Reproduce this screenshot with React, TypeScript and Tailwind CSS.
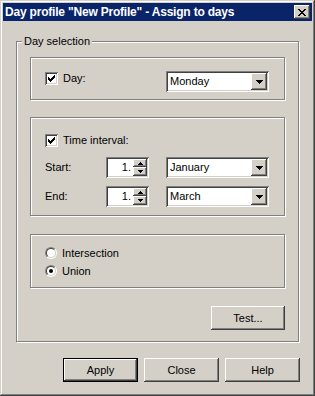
import React from "react";

const sunken =
  "shadow-[inset_1px_1px_0_#808080,inset_-1px_-1px_0_#ffffff,inset_2px_2px_0_#404040,inset_-2px_-2px_0_#d4d0c8]";
const raised =
  "shadow-[inset_-1px_-1px_0_#404040,inset_1px_1px_0_#ffffff,inset_-2px_-2px_0_#808080,inset_2px_2px_0_#d4d0c8]";
const etched = "border border-[#808080] shadow-[1px_1px_0_#ffffff,inset_1px_1px_0_#ffffff]";

function CheckBox() {
  const cols = [2, 3, 4, 3, 2, 1, 0];
  return (
    <span className={`w-[13px] h-[13px] shrink-0 bg-white flex items-center justify-center ${sunken}`}>
      <svg width="7" height="7" viewBox="0 0 7 7" shapeRendering="crispEdges">
        {cols.map((y, x) => (
          <rect key={x} x={x} y={y} width="1" height="3" fill="#000" />
        ))}
      </svg>
    </span>
  );
}

function Radio({ checked }: { checked?: boolean }) {
  return (
    <span className="w-[12px] h-[12px] shrink-0 rounded-full border border-t-[#808080] border-l-[#808080] border-r-white border-b-white flex">
      <span className="flex-1 rounded-full border border-t-[#404040] border-l-[#404040] border-r-[#d4d0c8] border-b-[#d4d0c8] bg-white flex items-center justify-center">
        {checked && <span className="w-[4px] h-[4px] rounded-full bg-black" />}
      </span>
    </span>
  );
}

function DownArrow({ w = 7 }: { w?: number }) {
  const rows = [];
  for (let i = 0; i * 2 < w; i++) rows.push(<rect key={i} x={i} y={i} width={w - i * 2} height="1" fill="#000" />);
  return (
    <svg width={w} height={rows.length} shapeRendering="crispEdges">
      {rows}
    </svg>
  );
}

function UpArrow({ w = 5 }: { w?: number }) {
  const rows = [];
  const n = Math.ceil(w / 2);
  for (let i = 0; i < n; i++) rows.push(<rect key={i} x={i} y={n - 1 - i} width={w - i * 2} height="1" fill="#000" />);
  return (
    <svg width={w} height={n} shapeRendering="crispEdges">
      {rows}
    </svg>
  );
}

function Combo({ value }: { value: string }) {
  return (
    <div className={`w-[103px] h-[21px] shrink-0 bg-white p-[2px] flex ${sunken}`}>
      <span className="flex-1 pl-[2px] leading-[17px]">{value}</span>
      <span className={`w-[16px] h-[17px] bg-[#d4d0c8] flex items-center justify-center ${raised}`}>
        <DownArrow />
      </span>
    </div>
  );
}

function Spin({ value }: { value: string }) {
  return (
    <div className={`w-[43px] h-[21px] shrink-0 bg-white p-[2px] flex ${sunken}`}>
      <span className="flex-1 pr-[2px] text-right leading-[17px]">{value}</span>
      <div className="w-[14px] flex flex-col">
        <span className={`h-[8px] bg-[#d4d0c8] flex items-center justify-center ${raised}`}>
          <UpArrow />
        </span>
        <span className={`h-[9px] bg-[#d4d0c8] flex items-center justify-center ${raised}`}>
          <DownArrow w={5} />
        </span>
      </div>
    </div>
  );
}

function Button({ label, isDefault }: { label: string; isDefault?: boolean }) {
  return (
    <div className={`w-[75px] h-[24px] ${isDefault ? "border border-black" : ""}`}>
      <div className={`w-full h-full flex items-center justify-center ${raised}`}>{label}</div>
    </div>
  );
}

export default function App() {
  const closeX = [
    [0, 1, 6, 7],
    [1, 2, 5, 6],
    [2, 3, 4, 5],
    [3, 4],
    [2, 3, 4, 5],
    [1, 2, 5, 6],
    [0, 1, 6, 7],
  ];

  return (
    <div className="w-[315px] h-[396px] bg-[#d4d0c8] p-[3px] flex flex-col text-[11px] text-black font-['Liberation_Sans',Arial,sans-serif] shadow-[inset_-1px_-1px_0_#404040,inset_1px_1px_0_#d4d0c8,inset_-2px_-2px_0_#808080,inset_2px_2px_0_#ffffff]">
      {/* Title bar */}
      <div className="h-[18px] bg-[#0a246a] flex items-center justify-between pl-[2px] pr-[2px]">
        <span className="text-white font-bold text-[12px] tracking-[-0.2px] leading-none">Day profile "New Profile" - Assign to days</span>
        <span className={`w-[16px] h-[14px] bg-[#d4d0c8] flex items-center justify-center ${raised}`}>
          <svg width="8" height="7" shapeRendering="crispEdges">
            {closeX.map((xs, y) => xs.map((x) => <rect key={`${x}-${y}`} x={x} y={y} width="1" height="1" fill="#000" />))}
          </svg>
        </span>
      </div>

      {/* Body */}
      <div className="flex-1 flex flex-col px-[13px]">
        <div className={`relative mt-[20px] h-[301px] px-[13px] pt-[15px] flex flex-col ${etched}`}>
          <span className="absolute left-[5px] top-[-8px] px-[2px] bg-[#d4d0c8] leading-[14px]">Day selection</span>

          {/* Day */}
          <div className={`h-[43px] pl-[14px] pr-[15px] pt-[13px] flex items-start ${etched}`}>
            <div className="mt-[1px] flex items-center flex-1">
              <CheckBox />
              <span className="ml-[5px] leading-[13px]">Day:</span>
            </div>
            <Combo value="Monday" />
          </div>

          {/* Time interval */}
          <div className={`mt-[17px] h-[99px] pl-[14px] pr-[15px] pt-[16px] flex flex-col ${etched}`}>
            <div className="flex items-center">
              <CheckBox />
              <span className="ml-[5px] leading-[13px]">Time interval:</span>
            </div>
            <div className="mt-[10px] flex items-center">
              <span className="w-[61px]">Start:</span>
              <Spin value="1." />
              <span className="flex-1" />
              <Combo value="January" />
            </div>
            <div className="mt-[8px] flex items-center">
              <span className="w-[61px]">End:</span>
              <Spin value="1." />
              <span className="flex-1" />
              <Combo value="March" />
            </div>
          </div>

          {/* Mode */}
          <div className={`mt-[18px] h-[54px] pl-[14px] pt-[9px] flex flex-col ${etched}`}>
            <div className="h-[18px] flex items-center">
              <Radio />
              <span className="ml-[5px]">Intersection</span>
            </div>
            <div className="h-[18px] flex items-center">
              <Radio checked />
              <span className="ml-[5px]">Union</span>
            </div>
          </div>

          <div className="mt-[18px] self-end">
            <div className={`w-[74px] h-[24px] flex items-center justify-center ${raised}`}>Test...</div>
          </div>
        </div>

        <div className="mt-[16px] mr-[-1px] flex justify-end gap-[6px]">
          <Button label="Apply" isDefault />
          <Button label="Close" />
          <Button label="Help" />
        </div>
      </div>
    </div>
  );
}
